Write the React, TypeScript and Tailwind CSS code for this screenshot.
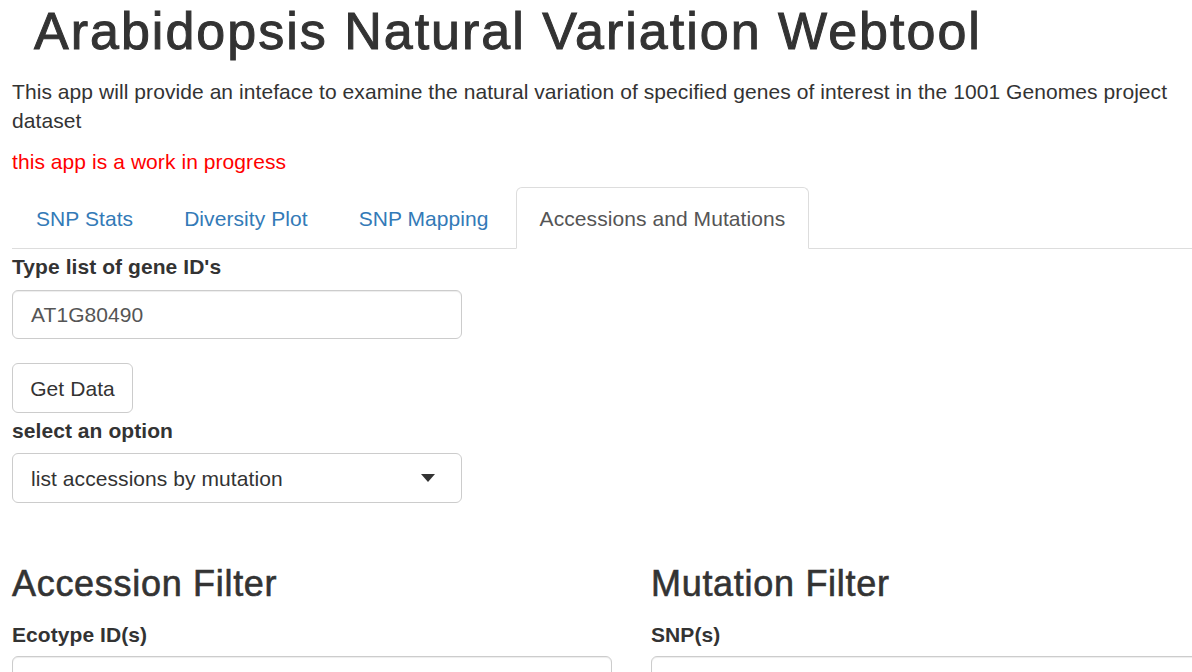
import { useState } from 'react';

const tabs = ['SNP Stats', 'Diversity Plot', 'SNP Mapping', 'Accessions and Mutations'];

const App = () => {
  const [active, setActive] = useState('Accessions and Mutations');

  return (
    <div
      className="w-[1192px] h-[672px] overflow-hidden bg-white px-[12px] text-[21px] leading-[29px] tracking-[0.07px] text-[#333]"
      style={{ fontFamily: '"Liberation Sans", Arial, sans-serif' }}
    >
      {/* Title */}
      <h1 className="ml-[22px] mt-[3px] text-[52px] leading-[57px] font-normal tracking-[2px] text-[#333] [-webkit-text-stroke:1px_#333]">
        Arabidopsis Natural Variation Webtool
      </h1>

      <p className="mt-[17px]">
        This app will provide an inteface to examine the natural variation of specified genes of interest in the 1001 Genomes project dataset
      </p>
      <p className="mt-[12px] text-[#ff0000]">this app is a work in progress</p>

      {/* Tabs */}
      <div className="mt-[11px] -mr-[12px] flex border-b border-[#ddd]">
        {tabs.map((t) => (
          <button
            key={t}
            onClick={() => setActive(t)}
            className={
              t === active
                ? '-mb-px mr-[3px] h-[62px] rounded-t-[6px] border border-[#ddd] border-b-white bg-white px-[23px] text-[#555]'
                : '-mb-px mr-[3px] h-[62px] rounded-t-[6px] border border-transparent px-[23px] text-[#337ab7]'
            }
          >
            {t}
          </button>
        ))}
      </div>

      {/* Gene input */}
      <label className="mt-[3px] mb-[9px] block font-bold">Type list of gene ID's</label>
      <div className="flex h-[49px] w-[450px] items-center rounded-[6px] border border-[#ccc] px-[18px] text-[#555] shadow-[inset_0_1px_1px_rgba(0,0,0,0.075)]">
        AT1G80490
      </div>

      <button className="mt-[24px] h-[50px] w-[121px] rounded-[6px] border border-[#ccc] bg-white text-[#333]">
        Get Data
      </button>

      <label className="mt-[3px] mb-[8px] block font-bold">select an option</label>
      <div className="flex h-[50px] w-[450px] items-center justify-between rounded-[6px] border border-[#ccc] pl-[18px] pr-[26px] text-[#333]">
        <span>list accessions by mutation</span>
        <svg width="14" height="8" viewBox="0 0 14 8">
          <polygon points="0,0 14,0 7,8" fill="#333" />
        </svg>
      </div>

      {/* Filters */}
      <div className="mt-[60px] flex gap-[39px]">
        <div className="w-[600px] shrink-0">
          <h3 className="text-[36px] leading-[41px] font-normal tracking-[0.7px] [-webkit-text-stroke:0.6px_#333]">
            Accession Filter
          </h3>
          <label className="mt-[16px] mb-[7px] block font-bold">Ecotype ID(s)</label>
          <div className="h-[49px] rounded-[6px] border border-[#ccc] shadow-[inset_0_1px_1px_rgba(0,0,0,0.075)]" />
        </div>
        <div className="w-[600px] shrink-0">
          <h3 className="text-[36px] leading-[41px] font-normal tracking-[0.7px] [-webkit-text-stroke:0.6px_#333]">
            Mutation Filter
          </h3>
          <label className="mt-[16px] mb-[7px] block font-bold">SNP(s)</label>
          <div className="h-[49px] rounded-[6px] border border-[#ccc] shadow-[inset_0_1px_1px_rgba(0,0,0,0.075)]" />
        </div>
      </div>
    </div>
  );
};

export default App;
